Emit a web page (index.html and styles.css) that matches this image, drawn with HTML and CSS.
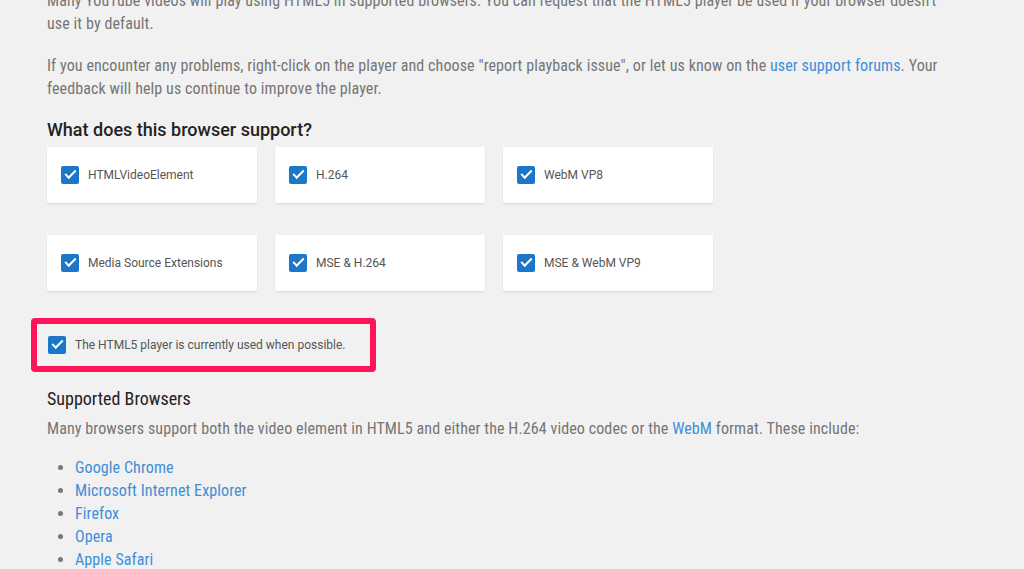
FILE: index.html
```html
<!DOCTYPE html>
<html lang="en">
<head>
    <meta charset="UTF-8">
    <meta name="viewport" content="width=device-width, initial-scale=1.0">
    <title>YouTube HTML5 Video Player</title>
    <link rel="stylesheet" href="styles.css">
</head>
<body>
    <div class="page">
        <p class="text">Many YouTube videos will play using HTML5 in supported browsers. You can request that the HTML5 player be used if your browser doesn't use it by default.</p>
        <p class="text">If you encounter any problems, right-click on the player and choose "report playback issue", or let us know on the <a href="#">user support forums</a>. Your feedback will help us continue to improve the player.</p>

        <h2 class="section-title">What does this browser support?</h2>
        <div class="support-grid">
            <div class="support-card"><span class="check"></span>HTMLVideoElement</div>
            <div class="support-card"><span class="check"></span>H.264</div>
            <div class="support-card"><span class="check"></span>WebM VP8</div>
            <div class="support-card"><span class="check"></span>Media Source Extensions</div>
            <div class="support-card"><span class="check"></span>MSE &amp; H.264</div>
            <div class="support-card"><span class="check"></span>MSE &amp; WebM VP9</div>
        </div>

        <div class="player-status">
            <span class="check"></span>The HTML5 player is currently used when possible.
        </div>

        <h2 class="browsers-title">Supported Browsers</h2>
        <p class="text">Many browsers support both the video element in HTML5 and either the H.264 video codec or the <a href="#">WebM</a> format. These include:</p>
        <ul class="browser-list">
            <li><a href="#">Google Chrome</a></li>
            <li><a href="#">Microsoft Internet Explorer</a></li>
            <li><a href="#">Firefox</a></li>
            <li><a href="#">Opera</a></li>
            <li><a href="#">Apple Safari</a></li>
        </ul>
    </div>
</body>
</html>
```

FILE: styles.css
```css
body {
    background-color: #f1f1f1;
    margin: 0;
    padding: 0;
    font-family: 'Roboto', 'Noto Sans', sans-serif;
    color: #767676;
}

.page {
    padding: 0 47px;
    margin-top: -11px;
}

.text {
    font-size: 16px;
    line-height: 23px;
    letter-spacing: 0.1px;
    font-stretch: condensed;
    margin: 0 0 19px 0;
    max-width: 905px;
}

a {
    color: #3f8ed8;
    text-decoration: none;
}

.section-title {
    font-size: 18px;
    font-weight: 500;
    color: #222222;
    margin: 18px 0 7px 0;
}

.support-grid {
    display: grid;
    grid-template-columns: repeat(3, 210px);
    column-gap: 18px;
    row-gap: 32px;
}

.support-card {
    background-color: #ffffff;
    height: 56px;
    border-radius: 2px;
    box-shadow: 0 1px 2px rgba(0, 0, 0, 0.12);
    display: flex;
    align-items: center;
    padding-left: 14px;
    font-size: 12px;
    color: #555555;
}

.check {
    width: 18px;
    height: 18px;
    border-radius: 2px;
    background-color: #1a77c9;
    margin-right: 9px;
    position: relative;
    flex-shrink: 0;
}

.check::after {
    content: '';
    position: absolute;
    left: 4px;
    top: 4px;
    width: 9px;
    height: 4px;
    border-left: 2px solid #ffffff;
    border-bottom: 2px solid #ffffff;
    transform: rotate(-45deg);
}

.player-status {
    display: flex;
    align-items: center;
    width: fit-content;
    white-space: nowrap;
    height: 42px;
    margin: 27px 0 0 -16px;
    padding: 0 24px 0 11px;
    border: 6px solid #fe1459;
    border-radius: 4px;
    font-size: 12px;
    color: #555555;
}

.browsers-title {
    font-size: 18px;
    font-weight: 400;
    font-stretch: condensed;
    color: #222222;
    margin: 16px 0 8px 0;
}

.browser-list {
    margin: -3px 0 0 0;
    padding-left: 28px;
    font-size: 16px;
    line-height: 23px;
    letter-spacing: 0.1px;
    font-stretch: condensed;
    color: #777777;
}
```
